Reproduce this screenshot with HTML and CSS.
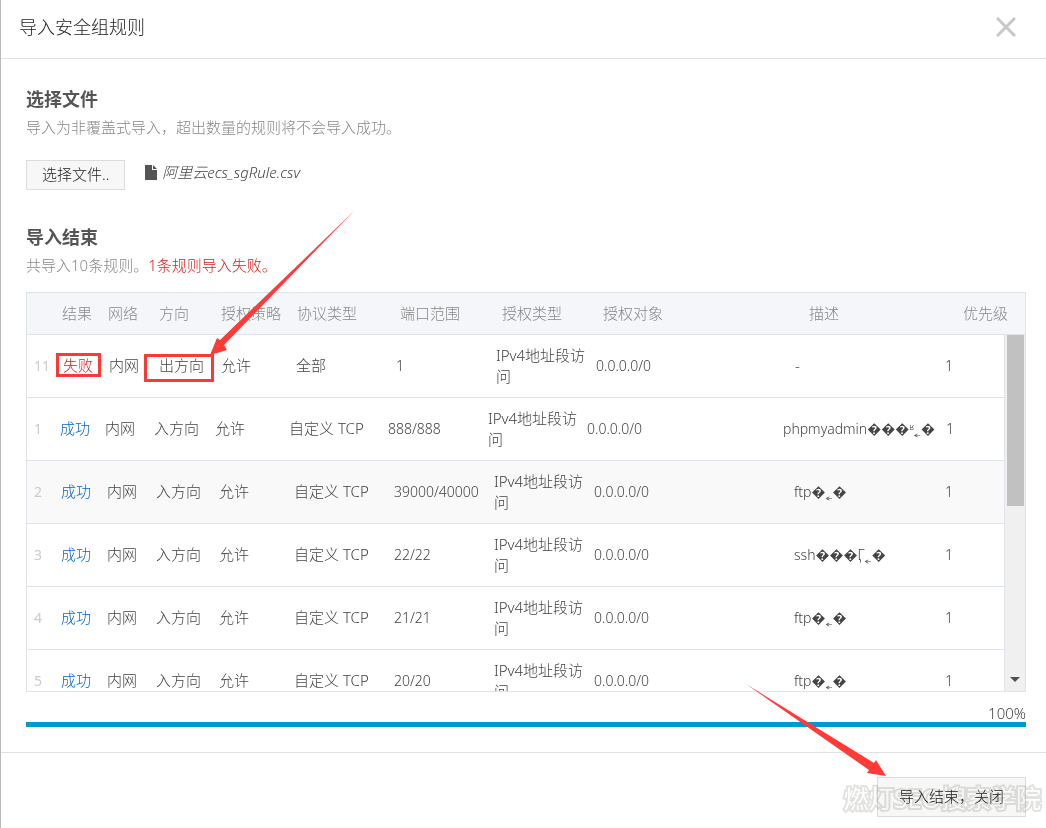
FILE: index.html
```html
<!DOCTYPE html>
<html lang="zh-CN">
<head>
<meta charset="utf-8">
<title>导入安全组规则</title>
<link rel="stylesheet" href="styles.css">
</head>
<body>
<main class="dialog">
  <header class="dialog-head">
    <h1 class="dialog-title">导入安全组规则</h1>
    <button class="close" type="button" aria-label="关闭">
      <svg width="20" height="20" viewBox="0 0 20 20"><path d="M1 1 19 19M19 1 1 19" stroke="#c8c8c8" stroke-width="3" fill="none"/></svg>
    </button>
  </header>

  <section class="dialog-body">
    <h2 class="section-title">选择文件</h2>
    <p class="hint">导入为非覆盖式导入，超出数量的规则将不会导入成功。</p>
    <div class="picker">
      <button class="btn" type="button">选择文件..</button>
      <span class="file">
        <svg width="12" height="15" viewBox="0 0 12 15"><path d="M0 0H7V5H12V15H0Z M8 0 12 4H8Z" fill="#555"/></svg>
        <em class="file-name">阿里云ecs_sgRule.csv</em>
      </span>
    </div>

    <h2 class="section-title">导入结束</h2>
    <p class="hint">共导入10条规则。<span class="error">1条规则导入失败。</span></p>

    <div class="rules">
      <table class="rules-table">
        <thead>
          <tr class="row row-head"><th></th><th>结果</th><th>网络</th><th>方向</th><th>授权策略</th><th>协议类型</th><th>端口范围</th><th>授权类型</th><th>授权对象</th><th>描述</th><th>优先级</th></tr>
        </thead>
        <tbody class="rows">
          <tr class="row row-fail"><td class="idx">11</td><td class="fail"><span class="mark mark-result">失败</span></td><td>内网</td><td><span class="mark mark-direction">出方向</span></td><td>允许</td><td>全部</td><td class="num">1</td><td class="type">IPv4地址段访问</td><td class="num">0.0.0.0/0</td><td>-</td><td class="num">1</td></tr>
          <tr class="row row-wide"><td class="idx">1</td><td class="ok">成功</td><td>内网</td><td>入方向</td><td>允许</td><td>自定义 TCP</td><td class="num">888/888</td><td class="type">IPv4地址段访问</td><td class="num">0.0.0.0/0</td><td class="desc">phpmyadmin���ʶ˿�</td><td class="num">1</td></tr>
          <tr class="row row-hover"><td class="idx">2</td><td class="ok">成功</td><td>内网</td><td>入方向</td><td>允许</td><td>自定义 TCP</td><td class="num">39000/40000</td><td class="type">IPv4地址段访问</td><td class="num">0.0.0.0/0</td><td class="desc">ftp�˿�</td><td class="num">1</td></tr>
          <tr class="row"><td class="idx">3</td><td class="ok">成功</td><td>内网</td><td>入方向</td><td>允许</td><td>自定义 TCP</td><td class="num">22/22</td><td class="type">IPv4地址段访问</td><td class="num">0.0.0.0/0</td><td class="desc">ssh���Ӷ˿�</td><td class="num">1</td></tr>
          <tr class="row"><td class="idx">4</td><td class="ok">成功</td><td>内网</td><td>入方向</td><td>允许</td><td>自定义 TCP</td><td class="num">21/21</td><td class="type">IPv4地址段访问</td><td class="num">0.0.0.0/0</td><td class="desc">ftp�˿�</td><td class="num">1</td></tr>
          <tr class="row"><td class="idx">5</td><td class="ok">成功</td><td>内网</td><td>入方向</td><td>允许</td><td>自定义 TCP</td><td class="num">20/20</td><td class="type">IPv4地址段访问</td><td class="num">0.0.0.0/0</td><td class="desc">ftp�˿�</td><td class="num">1</td></tr>
        </tbody>
      </table>
      <div class="scrollbar" aria-hidden="true">
        <div class="thumb"></div>
        <svg width="10" height="5" viewBox="0 0 10 5"><path d="M0 0H10L5 5Z" fill="#505050"/></svg>
      </div>
    </div>

    <div class="progress-label">100%</div>
    <div class="progress"><div class="progress-fill" style="width:100%"></div></div>
  </section>

  <footer class="dialog-foot">
    <button class="btn btn-done" type="button">导入结束，关闭</button>
    <span class="watermark">燃灯SEO搜索学院</span>
  </footer>

  <svg class="arrow arrow-direction" width="144" height="146" viewBox="0 0 144 146"><path d="M144 0 10 129 7 127 0 144 17 139 14 134Z" fill="#ff3a37"/></svg>
  <svg class="arrow arrow-close" width="140" height="92" viewBox="0 0 140 92"><path d="M0 0 128 79 130 76 140 92 121 89 123 86Z" fill="#ff3a37"/></svg>
</main>
</body>
</html>
```
FILE: styles.css
```css
* {
  box-sizing: border-box;
}

body {
  margin: 0;
  background: #fff;
  color: #444;
  font: 300 15px/21px "Noto Sans", "Noto Sans CJK SC", "DejaVu Sans", sans-serif;
}

h1, h2, p {
  margin: 0;
}

button {
  font: inherit;
  cursor: pointer;
}

.dialog {
  position: relative;
  min-height: 100vh;
  overflow: hidden;
  border-left: 1px solid #bbb;
}

.dialog-head {
  display: flex;
  align-items: center;
  justify-content: space-between;
  height: 59px;
  padding: 0 30px 4px 18px;
  border-bottom: 1px solid #e2e2e2;
}

.dialog-title {
  color: #222;
  font-size: 18px;
  font-weight: 300;
  line-height: 24px;
}

.close {
  display: flex;
  padding: 0;
  border: 0;
  background: none;
}

.dialog-body {
  padding: 28px 20px 25px 25px;
}

.section-title {
  color: #555;
  font-size: 18px;
  font-weight: 700;
  line-height: 24px;
}

.hint {
  padding-top: 6px;
  color: #888;
}

.error {
  color: #d9201a;
}

.picker {
  display: flex;
  gap: 20px;
  margin: 22px 0 35px;
}

.btn {
  height: 30px;
  padding: 0 15px 2px;
  border: 1px solid #ddd;
  background: #f7f7f7;
  color: #222;
  white-space: nowrap;
}

.file {
  display: flex;
  align-items: center;
  gap: 5px;
  height: 24px;
}

.rules {
  position: relative;
  height: 400px;
  margin-top: 16px;
  overflow: hidden;
  border: 1px solid #dfe4ea;
}

.rules-table,
.rules-table thead,
.rows {
  display: block;
}

.rows {
  margin-right: 20px;
  border-right: 1px solid #dfe4ea;
}

.row {
  display: grid;
  grid-template-columns: 34px 46px 49px 63px 75px 100px 100px 100px 1fr 151px 59px;
  align-items: center;
  height: 63px;
  border-bottom: 1px solid #dfe4ea;
}

.row-head {
  grid-template-columns: 35px 46px 51px 62px 76px 103px 102px 101px 1fr 154px 62px;
  height: 42px;
  background: #f4f6fa;
  color: #888;
}

.row-fail {
  grid-template-columns: 36px 46px 50px 62px 75px 100px 100px 100px 1fr 150px 59px;
}

.row-wide {
  grid-template-columns: 33px 45px 49px 61px 74px 99px 100px 99px 1fr 163px 58px;
}

.row-hover {
  background: #f9f9f9;
}

.row th,
.row td {
  padding: 0;
  font-weight: 300;
  text-align: left;
  white-space: nowrap;
}

.row td {
  padding-bottom: 2px;
}

.row .idx {
  padding-left: 7px;
  color: #ccc;
  font-weight: 400;
}

.row .num,
.row .idx,
.row .desc {
  font-size: 14px;
}

.row .type {
  padding: 0 7px 0 0;
  white-space: normal;
}

.row .ok {
  color: #0064c8;
}

.row .fail {
  color: #d9201a;
}

.mark {
  position: relative;
}

.mark::before {
  position: absolute;
  border: 3px solid #f93a37;
  content: "";
}

.mark-result::before {
  inset: -2px -8px -2px -7px;
}

.mark-direction::before {
  inset: -1px -10px -7px -15px;
}

.scrollbar {
  position: absolute;
  top: 42px;
  right: 0;
  bottom: 0;
  display: flex;
  flex-direction: column;
  align-items: center;
  justify-content: space-between;
  width: 20px;
  padding-bottom: 9px;
  background: #f0f0f0;
}

.thumb {
  width: 17px;
  height: 171px;
  background: #c1c1c1;
}

.progress-label {
  padding-top: 12px;
  font-size: 15px;
  line-height: 18px;
  text-align: right;
}

.progress {
  height: 5px;
  background: #eee;
}

.progress-fill {
  height: 100%;
  background: #0099cf;
}

.dialog-foot {
  position: relative;
  display: flex;
  justify-content: flex-end;
  padding: 24px 20px 11px;
  border-top: 1px solid #e2e2e2;
}

.btn-done {
  height: 40px;
  padding: 0 21px 2px;
}

.watermark {
  position: absolute;
  right: 5px;
  bottom: 12px;
  color: #fff;
  font-size: 25px;
  font-weight: 400;
  line-height: 36px;
  white-space: nowrap;
  pointer-events: none;
  mix-blend-mode: multiply;
  paint-order: stroke fill;
  -webkit-text-stroke: 4px #e2e2df;
}

.arrow {
  position: absolute;
  pointer-events: none;
}

.arrow-direction {
  top: 211px;
  left: 209px;
}

.arrow-close {
  top: 684px;
  right: 160px;
}
```
